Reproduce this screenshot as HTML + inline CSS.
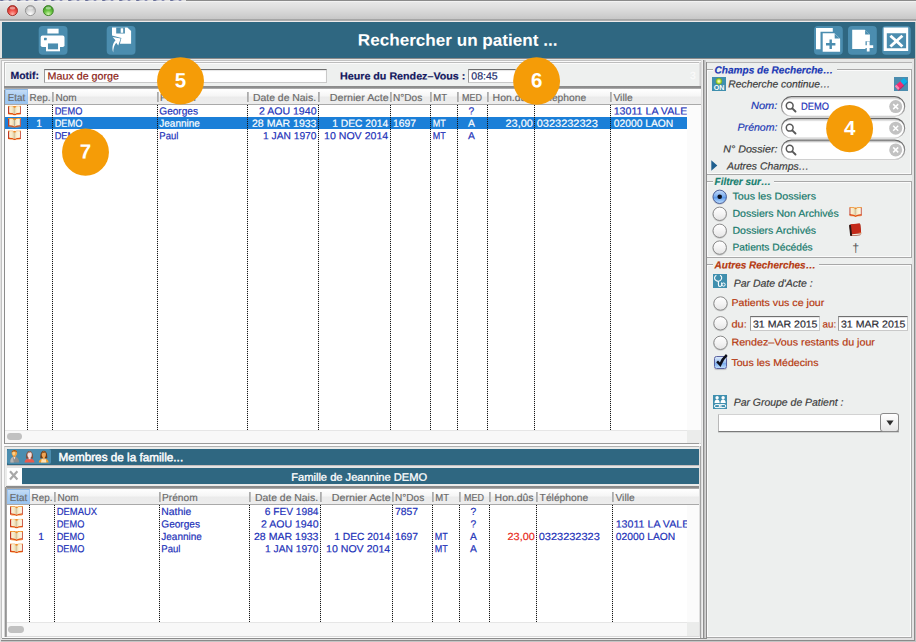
<!DOCTYPE html>
<html lang="fr">
<head>
<meta charset="utf-8">
<title>Rechercher un patient ...</title>
<style>
html,body{margin:0;padding:0;}
body{width:916px;height:642px;overflow:hidden;background:#d9d9d9;font-family:"Liberation Sans",sans-serif;}
#win{position:relative;width:916px;height:642px;overflow:hidden;background:#e3e4e3;}
#win div,#win span,#win svg{position:absolute;box-sizing:border-box;}
.t{-webkit-text-stroke:0.18px currentColor;white-space:pre;line-height:normal;z-index:5;transform-origin:0 50%;}
.vd{width:1px;background:repeating-linear-gradient(to bottom,#161616 0,#161616 1px,rgba(0,0,0,.1) 1px,rgba(0,0,0,.1) 2px);z-index:4;}
.hs{width:1px;background:linear-gradient(to right,#a4a4a4,#c4c4c4);z-index:4;}
.hdr{background:linear-gradient(to bottom,#ffffff 0%,#f6f6f6 45%,#ebebeb 55%,#ededed 100%);border-bottom:1px solid #a9a9a9;}
.etat{background:linear-gradient(to bottom,#c4dcf5 0%,#a9cdf3 50%,#9cc6f2 100%);border:1px solid #9cc4ee;border-top-color:#8ab6e4;}
.sel{background:#1b7fd8;}
.rad{width:14px;height:14px;border-radius:50%;border:1px solid #8d8d8d;background:linear-gradient(to bottom,#ffffff,#ececec);box-shadow:0 1px 1px rgba(0,0,0,.18);}
.grp{border:1px solid #a8a8a8;box-shadow:inset 0 0 0 1px #fbfbfb;}
.pill{height:19px;border-radius:10px;background:#fff;border:1px solid #8f8f8f;box-shadow:inset 0 1px 2px rgba(0,0,0,.3);}
.clr{width:13px;height:13px;border-radius:50%;background:#c4c4c4;}
.orb{width:46px;height:46px;border-radius:50%;background:#f59c07;z-index:10;}
.inp{background:#fff;border:1px solid #c9c9c9;border-top-color:#6f6f6f;border-left-color:#9a9a9a;box-shadow:inset 0 1px 1px rgba(0,0,0,.10);}
.ibtn{width:29px;height:29px;border-radius:4px;background:#4b8daf;}
</style>
</head>
<body>
<div id="win">
<div style="left:0px;top:0px;width:916px;height:22px;background:linear-gradient(to bottom,#f4f4f4 0px,#f2f2f2 2px,#e7e7e7 2.5px,#dedede 8px,#d2d2d2 14px,#c8c8c8 18.6px,#a4a4a4 19px,#a6a6a6 20px,#b8b8b8 21px,#e6e2e2 21px,#f6f2f2 22px);"></div>
<div style="left:0px;top:0px;width:916px;height:1px;background:#8a8a8a;"></div>
<div style="left:0px;top:0px;width:186px;height:1px;background:repeating-linear-gradient(to right,#8a90a8 0,#5a6090 2px,#c0c4d0 4px,#e0e0e4 8px,#6a70a0 10px,#dcdcdc 12px,#e4e4e4 17px);"></div>
<svg width="14" height="14" viewBox="0 0 14 14" style="left:5px;top:4px;z-index:3;"><defs><radialGradient id="tl12" cx="0.5" cy="0.86" r="0.75"><stop offset="0" stop-color="#ffb4aa"/><stop offset="0.5" stop-color="#f2564e"/><stop offset="1" stop-color="#c62f28"/></radialGradient></defs><circle cx="7.50" cy="6.6" r="5.0" fill="url(#tl12)" stroke="#9c2a24" stroke-width="0.9"/><ellipse cx="7.50" cy="3.9" rx="2.8" ry="1.5" fill="rgba(255,255,255,0.45)"/></svg>
<svg width="14" height="14" viewBox="0 0 14 14" style="left:23px;top:4px;z-index:3;"><defs><radialGradient id="tl30" cx="0.5" cy="0.86" r="0.75"><stop offset="0" stop-color="#ffffff"/><stop offset="0.5" stop-color="#dcdcdc"/><stop offset="1" stop-color="#b4b4b4"/></radialGradient></defs><circle cx="7.40" cy="6.6" r="5.0" fill="url(#tl30)" stroke="#8e8e8e" stroke-width="0.9"/><ellipse cx="7.40" cy="3.9" rx="2.8" ry="1.5" fill="rgba(255,255,255,0.45)"/></svg>
<svg width="14" height="14" viewBox="0 0 14 14" style="left:41px;top:4px;z-index:3;"><defs><radialGradient id="tl48" cx="0.5" cy="0.86" r="0.75"><stop offset="0" stop-color="#d2f5b0"/><stop offset="0.5" stop-color="#6cc644"/><stop offset="1" stop-color="#3f9a24"/></radialGradient></defs><circle cx="7.30" cy="6.6" r="5.0" fill="url(#tl48)" stroke="#3a7f22" stroke-width="0.9"/><ellipse cx="7.30" cy="3.9" rx="2.8" ry="1.5" fill="rgba(255,255,255,0.45)"/></svg>
<div style="left:2px;top:22px;width:913px;height:36px;background:#2f6781;"></div>
<div style="left:0px;top:58px;width:916px;height:1.3px;background:#8a8a8a;"></div>
<div style="left:0px;top:59.3px;width:916px;height:1px;background:#d0d0d0;"></div>
<svg width="32" height="32" viewBox="0 0 32 32" style="left:37px;top:24px;z-index:2;"><g transform="translate(1.70 1.90)"><rect width="28.8" height="28.9" rx="4" fill="#4b8daf"/><rect x="8.700" y="2.800" width="11.200" height="4.800" fill="#fff"/>
<rect x="2" y="9.700" width="23.800" height="11.500" rx="1.800" fill="#fff"/>
<rect x="7.300" y="16" width="14" height="9.400" fill="#fff"/>
<rect x="9.250" y="17.550" width="10.100" height="5.850" fill="#4b8daf"/>
<rect x="5.300" y="11.800" width="2.700" height="2.600" rx=".5" fill="#4b8daf"/>
</g></svg>
<svg width="32" height="32" viewBox="0 0 32 32" style="left:105px;top:24px;z-index:2;"><g transform="translate(1.70 1.90)"><rect width="28.8" height="28.9" rx="4" fill="#4b8daf"/><path d="M5.300 1.600h15.400l3.700 3.600v12.600h-11.200l1.500-5.800-9.400-2.400z" fill="#fff"/>
<rect x="9.500" y="1.600" width="8.700" height="6" fill="#4b8daf"/>
<rect x="14" y="2.400" width="2.500" height="4.500" fill="#fff"/>
<path d="M6.500 26.600c-1.500-4.800-.5-9.200 2.300-12.200l-2.900-3.200 8.100 1.500-2.500 6.900-2-2.700c-2 2.400-3 5.400-3 9.700z" fill="#fff"/>
</g></svg>
<svg width="32" height="32" viewBox="0 0 32 32" style="left:813px;top:24px;z-index:2;"><g transform="translate(1.00 1.90)"><rect width="28.8" height="28.9" rx="4" fill="#4b8daf"/><path d="M2 2.100h16.800v3.700h-12.300v17.600h-4.500z" fill="#fff"/>
<path d="M8.700 7.400h11.600l5.800 5.400v13.100h-17.400z" fill="#fff"/>
<path d="M20.700 7.800v4.800h5z" fill="#4b8daf"/>
<path d="M15.500 13.700h2.400v3.500h3.500v2.400h-3.500v3.500h-2.400v-3.500h-3.500v-2.400h3.500z" fill="#4b8daf"/>
</g></svg>
<svg width="32" height="32" viewBox="0 0 32 32" style="left:847px;top:24px;z-index:2;"><g transform="translate(1.00 1.90)"><rect width="28.8" height="28.9" rx="4" fill="#4b8daf"/><path d="M4.200 3.800h12.600l5.100 5v6.500h-4.400v7.800h-13.300z" fill="#fff"/>
<path d="M17.100 4.200v4.400h4.600z" fill="#4b8daf"/>
<path d="M18.800 15.700h2.800v3.600h3.600v2.800h-3.600v3.600h-2.800v-3.600h-3.600v-2.800h3.600z" fill="#fff"/>
</g></svg>
<svg width="32" height="32" viewBox="0 0 32 32" style="left:881px;top:24px;z-index:2;"><g transform="translate(1.00 1.90)"><rect width="28.8" height="28.9" rx="4" fill="#4b8daf"/><path d="M1.600 1.500h24.600v23.600h-24.600z M4.800 7.400v15h19.300v-15z" fill="#fff" fill-rule="evenodd"/>
<path d="M9.400 8.800l5 4.600 5-4.600 2 2-4.900 4.400 4.900 4.400-2 2-5-4.600-5 4.600-2-2 4.900-4.400-4.900-4.400z" fill="#fff"/>
</g></svg>
<div style="left:0px;top:59px;width:916px;height:583px;background:#e6e7e6;"></div>
<div style="left:1px;top:60px;width:704px;height:579px;border:1px solid #c2c2c2;background:#fafafa;"></div>
<div style="left:4px;top:62px;width:698px;height:382px;border:1px solid #bdbdbd;border-right:none;border-bottom-color:#9a9a9a;background:#eef0ef;box-shadow:inset 1px 1px 0 #fbfbfb;"></div>
<div style="left:4px;top:87px;width:1px;height:357px;background:#8c8c8c;"></div>
<div style="left:4px;top:446px;width:698px;height:192px;border-top:1px solid #b2b2b2;border-left:1px solid #d4d4d4;background:#ebeceb;"></div>
<div style="left:699.4px;top:62px;width:1.6px;height:577px;background:linear-gradient(to right,#e6e6e6,#c9c9c9);"></div>
<div style="left:701px;top:60px;width:2px;height:579px;background:linear-gradient(to right,#d6d6d6,#f6f6f6);"></div>
<div style="left:703px;top:60px;width:1px;height:579px;background:#8e8e8e;"></div>
<div style="left:704px;top:60px;width:2px;height:579px;background:linear-gradient(to right,#b2b2b2,#dedede);"></div>
<div style="left:706px;top:62px;width:1px;height:577px;background:#8c8c8c;z-index:1;"></div>
<div style="left:706px;top:62px;width:208px;height:577px;background:#edefee;border-top:1px solid #b4b4b4;"></div>
<div style="left:0px;top:638px;width:916px;height:2px;background:#e2e2e2;"></div>
<div style="left:2px;top:637.6px;width:704px;height:1.4px;background:#8c8c8c;"></div>
<div style="left:912px;top:59px;width:2px;height:581px;background:#e4e4e4;"></div>
<div style="left:914px;top:59px;width:1px;height:582px;background:#8c8c8c;"></div>
<div style="left:915px;top:22px;width:1px;height:620px;background:#c2c2c2;"></div>
<div style="left:0px;top:640px;width:915px;height:1px;background:#8a8a8a;"></div>
<div style="left:0px;top:641px;width:916px;height:1px;background:#c4c4c4;"></div>
<div style="left:0px;top:59px;width:1px;height:583px;background:#e2e2e2;"></div>
<div class="inp" style="left:44.3px;top:68.8px;width:283.2px;height:13.9px;"></div>
<div class="inp" style="left:467.5px;top:68.8px;width:48px;height:13.9px;"></div>
<div style="left:4.2px;top:86.4px;width:697.0999999999999px;height:3.4px;background:linear-gradient(to bottom,#8a8a8a 0,#8e8e8e 40%,#a9a9a9 60%,#c6c6c6 100%);"></div>
<div style="left:5.2px;top:104.60000000000001px;width:682.0999999999999px;height:325.4px;background:#fff;"></div>
<div style="left:687.3px;top:104.60000000000001px;width:14.0px;height:325.4px;background:#fbfbfb;"></div>
<div style="left:687.3px;top:430px;width:14.0px;height:13.2px;background:#ebeceb;z-index:2;"></div>
<div class="hdr" style="left:5.2px;top:89.4px;width:696.0999999999999px;height:15.2px;"></div>
<div class="etat" style="left:5.2px;top:89.4px;width:22.8px;height:14.2px;"></div>
<div class="hs" style="left:52.1px;top:92.0px;width:2px;height:10.0px;"></div>
<div class="hs" style="left:157.3px;top:92.0px;width:2px;height:10.0px;"></div>
<div class="hs" style="left:246.7px;top:92.0px;width:2px;height:10.0px;"></div>
<div class="hs" style="left:317.9px;top:92.0px;width:2px;height:10.0px;"></div>
<div class="hs" style="left:390.1px;top:92.0px;width:2px;height:10.0px;"></div>
<div class="hs" style="left:429.9px;top:92.0px;width:2px;height:10.0px;"></div>
<div class="hs" style="left:456.9px;top:92.0px;width:2px;height:10.0px;"></div>
<div class="hs" style="left:486.9px;top:92.0px;width:2px;height:10.0px;"></div>
<div class="hs" style="left:533.9px;top:92.0px;width:2px;height:10.0px;"></div>
<div class="hs" style="left:610.1px;top:92.0px;width:2px;height:10.0px;"></div>
<div class="vd" style="left:27.0px;top:104.60000000000001px;width:1px;height:325.4px;"></div>
<div class="vd" style="left:52.2px;top:104.60000000000001px;width:1px;height:325.4px;"></div>
<div class="vd" style="left:157.4px;top:104.60000000000001px;width:1px;height:325.4px;"></div>
<div class="vd" style="left:246.79999999999998px;top:104.60000000000001px;width:1px;height:325.4px;"></div>
<div class="vd" style="left:318.0px;top:104.60000000000001px;width:1px;height:325.4px;"></div>
<div class="vd" style="left:390.20000000000005px;top:104.60000000000001px;width:1px;height:325.4px;"></div>
<div class="vd" style="left:430.0px;top:104.60000000000001px;width:1px;height:325.4px;"></div>
<div class="vd" style="left:457.0px;top:104.60000000000001px;width:1px;height:325.4px;"></div>
<div class="vd" style="left:487.0px;top:104.60000000000001px;width:1px;height:325.4px;"></div>
<div class="vd" style="left:534.0px;top:104.60000000000001px;width:1px;height:325.4px;"></div>
<div class="vd" style="left:610.2px;top:104.60000000000001px;width:1px;height:325.4px;"></div>
<svg width="13.2" height="10.3" viewBox="0 0 26 21" preserveAspectRatio="none" style="left:8px;top:105px;transform:translate(0.00px,0.40px);z-index:6;"><use href="#book"/></svg>
<div class="sel" style="left:5.2px;top:117px;width:682.0999999999999px;height:12px;z-index:3;"></div>
<svg width="13.2" height="10.3" viewBox="0 0 26 21" preserveAspectRatio="none" style="left:8px;top:117px;transform:translate(0.00px,0.85px);z-index:6;"><use href="#book"/></svg>
<svg width="13.2" height="10.3" viewBox="0 0 26 21" preserveAspectRatio="none" style="left:8px;top:130px;transform:translate(0.00px,0.30px);z-index:6;"><use href="#book"/></svg>
<div style="left:5.2px;top:430px;width:696.0999999999999px;height:13.2px;background:#f8f8f8;border-top:1px solid #e6e6e6;"></div>
<div style="left:7.0px;top:433.4px;width:15.2px;height:6.8px;background:#c1c1c1;border-radius:3.4px;"></div>
<div style="left:6.2px;top:486.4px;width:693.0px;height:3.4px;background:linear-gradient(to bottom,#8a8a8a 0,#8e8e8e 40%,#a9a9a9 60%,#c6c6c6 100%);"></div>
<div style="left:7.2px;top:504.59999999999997px;width:680.0999999999999px;height:117.80000000000001px;background:#fff;"></div>
<div style="left:687.3px;top:504.59999999999997px;width:11.900000000000091px;height:117.80000000000001px;background:#fbfbfb;"></div>
<div style="left:687.3px;top:622.4px;width:11.900000000000091px;height:13.2px;background:#ebeceb;z-index:2;"></div>
<div class="hdr" style="left:7.2px;top:489.4px;width:692.0px;height:15.2px;"></div>
<div class="etat" style="left:7.2px;top:489.4px;width:22.8px;height:14.2px;"></div>
<div class="hs" style="left:54.1px;top:492.0px;width:2px;height:10.0px;"></div>
<div class="hs" style="left:159.3px;top:492.0px;width:2px;height:10.0px;"></div>
<div class="hs" style="left:248.7px;top:492.0px;width:2px;height:10.0px;"></div>
<div class="hs" style="left:319.9px;top:492.0px;width:2px;height:10.0px;"></div>
<div class="hs" style="left:392.1px;top:492.0px;width:2px;height:10.0px;"></div>
<div class="hs" style="left:431.9px;top:492.0px;width:2px;height:10.0px;"></div>
<div class="hs" style="left:458.9px;top:492.0px;width:2px;height:10.0px;"></div>
<div class="hs" style="left:488.9px;top:492.0px;width:2px;height:10.0px;"></div>
<div class="hs" style="left:535.9px;top:492.0px;width:2px;height:10.0px;"></div>
<div class="hs" style="left:612.1px;top:492.0px;width:2px;height:10.0px;"></div>
<div class="vd" style="left:29.0px;top:504.59999999999997px;width:1px;height:117.80000000000001px;"></div>
<div class="vd" style="left:54.2px;top:504.59999999999997px;width:1px;height:117.80000000000001px;"></div>
<div class="vd" style="left:159.4px;top:504.59999999999997px;width:1px;height:117.80000000000001px;"></div>
<div class="vd" style="left:248.79999999999998px;top:504.59999999999997px;width:1px;height:117.80000000000001px;"></div>
<div class="vd" style="left:320.0px;top:504.59999999999997px;width:1px;height:117.80000000000001px;"></div>
<div class="vd" style="left:392.20000000000005px;top:504.59999999999997px;width:1px;height:117.80000000000001px;"></div>
<div class="vd" style="left:432.0px;top:504.59999999999997px;width:1px;height:117.80000000000001px;"></div>
<div class="vd" style="left:459.0px;top:504.59999999999997px;width:1px;height:117.80000000000001px;"></div>
<div class="vd" style="left:489.0px;top:504.59999999999997px;width:1px;height:117.80000000000001px;"></div>
<div class="vd" style="left:536.0px;top:504.59999999999997px;width:1px;height:117.80000000000001px;"></div>
<div class="vd" style="left:612.2px;top:504.59999999999997px;width:1px;height:117.80000000000001px;"></div>
<svg width="13.2" height="10.3" viewBox="0 0 26 21" preserveAspectRatio="none" style="left:10px;top:506px;transform:translate(0.00px,0.00px);z-index:6;"><use href="#book"/></svg>
<svg width="13.2" height="10.3" viewBox="0 0 26 21" preserveAspectRatio="none" style="left:10px;top:518px;transform:translate(0.00px,0.45px);z-index:6;"><use href="#book"/></svg>
<svg width="13.2" height="10.3" viewBox="0 0 26 21" preserveAspectRatio="none" style="left:10px;top:530px;transform:translate(0.00px,0.90px);z-index:6;"><use href="#book"/></svg>
<svg width="13.2" height="10.3" viewBox="0 0 26 21" preserveAspectRatio="none" style="left:10px;top:543px;transform:translate(0.00px,0.35px);z-index:6;"><use href="#book"/></svg>
<div style="left:7.2px;top:622.4px;width:692.0px;height:13.2px;background:#f8f8f8;border-top:1px solid #e6e6e6;"></div>
<div style="left:8.2px;top:625.8px;width:15.9px;height:6.8px;background:#c1c1c1;border-radius:3.4px;"></div>
<div style="left:5px;top:487px;width:1.6px;height:151px;background:linear-gradient(to right,#8a8a8a,#b0b0b0);"></div>
<div style="left:7px;top:635.6px;width:692.4px;height:1px;background:#dadada;"></div>
<div style="left:4px;top:636.6px;width:697px;height:1.2px;background:#fdfdfd;"></div>
<div style="left:2px;top:444px;width:699px;height:2px;background:#fbfbfb;"></div>
<div style="left:699.6px;top:446px;width:1.8px;height:192px;background:linear-gradient(to right,#b8b8b8,#8e8e8e);z-index:1;"></div>
<div style="left:7.2px;top:449.2px;width:692px;height:15.4px;background:#2f6781;"></div>
<div style="left:7.4px;top:449.4px;width:43.6px;height:14.6px;background:#4b8daf;border-radius:2px;"></div>
<div style="left:7.2px;top:464.6px;width:692px;height:3.4px;background:#e4e4e4;border-top:1px solid #c4bebe;"></div>
<div style="left:21.4px;top:468.1px;width:677.8px;height:16px;background:#2f6781;"></div>
<div style="left:7.2px;top:468.1px;width:14.4px;height:16px;background:#ffffff;"></div>
<div style="left:7.2px;top:484.1px;width:14.4px;height:1.2px;background:#ffffff;"></div>
<svg width="44" height="16" viewBox="0 0 44 16" style="left:7.200px;top:449px;z-index:6;">
<g>
<path d="M3.400 13.400c-.4-4.200 1.600-5.600 4-5.800 2.400.2 4.600 1.600 4.800 5.800z" fill="#8e8e8e"/>
<path d="M3.400 13.400c-.2-3 .8-4.800 2.400-5.400l1 5.400z" fill="#b4b4b4"/>
<path d="M6.300 7.600h2.200l-1.100 2.800z" fill="#f2f2f2"/>
<rect x="6.300" y="5.800" width="2.200" height="2.400" fill="#e8923a"/>
<ellipse cx="7.400" cy="4" rx="2.700" ry="3.100" fill="#f4a546"/>
<ellipse cx="6.800" cy="4.200" rx="1.300" ry="2" fill="#fbd08a"/>
<path d="M4.600 3.800c-.2-3.600 5.800-3.800 5.600 0-.8-1.600-4.600-1.800-5.600 0z" fill="#9a5418"/>
</g>
<g>
<path d="M17.600 13.600c0-5.400 9.800-5.400 9.800 0z" fill="#ea5a4c"/>
<path d="M19 9.400c-1-9.800 8-9.800 7 0z" fill="#7d5140"/>
<ellipse cx="22.600" cy="5.800" rx="2.200" ry="3" fill="#fbe0dc"/>
<rect x="21.600" y="8" width="2" height="2.200" fill="#fbe0dc"/>
<path d="M20.200 5c.6-2 2.600-2.800 4.600-1.400-1.600-.2-3.200.2-4.600 1.400z" fill="#7d5140"/>
</g>
<g>
<path d="M31.800 13.600c0-5.600 9.800-5.600 9.800 0z" fill="#f6a02c"/>
<path d="M34.800 9.800h3.800l.8 3.800h-5.400z" fill="#fde2b8"/>
<path d="M33.400 9.200c-1-9.800 7.800-9.800 6.800 0z" fill="#6e3a12"/>
<ellipse cx="36.800" cy="5.600" rx="2.100" ry="3" fill="#eda556"/>
<rect x="35.800" y="8" width="2" height="2.400" fill="#eda556"/>
<path d="M34.400 4.800c.8-2 3.200-2.600 4.800-1.200-1.800-.2-3.400.2-4.800 1.200z" fill="#6e3a12"/>
</g>
</svg>
<svg width="14" height="16" viewBox="0 0 14 16" style="left:7.2px;top:468.1px;z-index:6;"><path d="M3 3.200l7.400 8.200M10.400 3.200l-7.400 8.200" stroke="#a8a8a8" stroke-width="2.200" fill="none"/></svg>
<div class="grp" style="left:706.2px;top:69.0px;width:206px;height:106.0px;"></div>
<div style="left:712.6px;top:63.0px;width:124.0px;height:12px;background:#edefee;"></div>
<div class="grp" style="left:706.2px;top:181.2px;width:206px;height:76.40000000000003px;"></div>
<div style="left:712.6px;top:175.2px;width:61.800000000000004px;height:12px;background:#edefee;"></div>
<div class="grp" style="left:706.2px;top:264.2px;width:206px;height:374.00000000000006px;"></div>
<div style="left:712.6px;top:258.2px;width:106.6px;height:12px;background:#edefee;"></div>
<svg width="14" height="14.400" viewBox="0 0 14 14.400" style="left:711.600px;top:77px;z-index:6;"><defs><radialGradient id="ong"><stop offset="0" stop-color="#ffffe8"/><stop offset="0.35" stop-color="#e4f48c"/><stop offset="0.7" stop-color="#a4d030"/><stop offset="1" stop-color="#74a81c"/></radialGradient></defs><rect width="14" height="14.400" fill="#3f8fae"/><circle cx="6.900" cy="4.300" r="3.200" fill="url(#ong)"/><text x="1.700" y="12.900" font-family="Liberation Sans, sans-serif" font-size="7" font-weight="bold" fill="#fff" textLength="10.600" lengthAdjust="spacingAndGlyphs">ON</text></svg>
<svg width="14.600" height="14.400" viewBox="0 0 14.600 14.400" style="left:893.600px;top:77px;z-index:6;"><rect width="14.600" height="14.400" fill="#4b8daf"/><g transform="rotate(-42 7.300 7.200)"><rect x="1" y="9" width="7.600" height="1.300" fill="#c42660"/><rect x="8.600" y="9" width="5" height="1.300" fill="#0c8cc4"/><rect x="1" y="4.400" width="7.800" height="4.800" rx=".7" fill="#f02c72"/><rect x="8.600" y="4.400" width="5" height="4.800" rx=".7" fill="#08b0ea"/><rect x="1" y="4.400" width="2.300" height="4.800" rx=".7" fill="#f88cb4"/></g></svg>
<svg width="130" height="26" viewBox="0 0 130 26" style="left:778px;top:94px;z-index:2;"><rect x="3.0" y="2.20" width="124.2" height="20.8" rx="10.4" fill="none" stroke="rgba(255,255,255,.75)" stroke-width="1"/><rect x="3.5" y="2.70" width="123.2" height="19.7" rx="9.85" fill="#fff" stroke="url(#pst)" stroke-width="1.25"/><path d="M8 5.10c1.800-.9 3.800-1.100 6-1.100h102.200c2.200 0 4.200.2 6 1.100" fill="none" stroke="rgba(0,0,0,.2)" stroke-width="1.2"/><path d="M6.400 6.70c2.200-1.500 4.800-1.700 7.600-1.700h102.200c2.800 0 5.400.2 7.600 1.700" fill="none" stroke="rgba(0,0,0,.07)" stroke-width="1.2"/></svg>
<svg width="12" height="12" viewBox="0 0 12 12" style="left:784.600px;top:101.1px;z-index:6;"><circle cx="4.700" cy="4.700" r="3.400" fill="none" stroke="#585858" stroke-width="1.500"/><path d="M7.300 7.300l3.200 3.200" stroke="#585858" stroke-width="1.900" stroke-linecap="round"/></svg>
<svg width="15" height="15" viewBox="0 0 15 15" style="left:888px;top:100px;z-index:6;"><g transform="translate(1.2 0.10)"><circle cx="6.500" cy="6.500" r="6.500" fill="#c2c2c2"/><path d="M4 4l5 5M9 4l-5 5" stroke="#fff" stroke-width="1.500"/></g></svg>
<svg width="130" height="26" viewBox="0 0 130 26" style="left:778px;top:116px;z-index:2;"><rect x="3.0" y="1.80" width="124.2" height="20.8" rx="10.4" fill="none" stroke="rgba(255,255,255,.75)" stroke-width="1"/><rect x="3.5" y="2.30" width="123.2" height="19.7" rx="9.85" fill="#fff" stroke="url(#pst)" stroke-width="1.25"/><path d="M8 4.70c1.800-.9 3.800-1.100 6-1.100h102.200c2.200 0 4.200.2 6 1.100" fill="none" stroke="rgba(0,0,0,.2)" stroke-width="1.2"/><path d="M6.400 6.30c2.200-1.500 4.800-1.700 7.600-1.700h102.200c2.800 0 5.400.2 7.600 1.700" fill="none" stroke="rgba(0,0,0,.07)" stroke-width="1.2"/></svg>
<svg width="12" height="12" viewBox="0 0 12 12" style="left:784.600px;top:122.7px;z-index:6;"><circle cx="4.700" cy="4.700" r="3.400" fill="none" stroke="#585858" stroke-width="1.500"/><path d="M7.300 7.300l3.200 3.200" stroke="#585858" stroke-width="1.900" stroke-linecap="round"/></svg>
<svg width="15" height="15" viewBox="0 0 15 15" style="left:888px;top:121px;z-index:6;"><g transform="translate(1.2 0.70)"><circle cx="6.500" cy="6.500" r="6.500" fill="#c2c2c2"/><path d="M4 4l5 5M9 4l-5 5" stroke="#fff" stroke-width="1.500"/></g></svg>
<svg width="130" height="26" viewBox="0 0 130 26" style="left:778px;top:138px;z-index:2;"><rect x="3.0" y="1.50" width="124.2" height="20.8" rx="10.4" fill="none" stroke="rgba(255,255,255,.75)" stroke-width="1"/><rect x="3.5" y="2.00" width="123.2" height="19.7" rx="9.85" fill="#fff" stroke="url(#pst)" stroke-width="1.25"/><path d="M8 4.40c1.800-.9 3.800-1.100 6-1.100h102.200c2.200 0 4.200.2 6 1.100" fill="none" stroke="rgba(0,0,0,.2)" stroke-width="1.2"/><path d="M6.400 6.00c2.200-1.500 4.800-1.700 7.600-1.700h102.200c2.800 0 5.400.2 7.600 1.700" fill="none" stroke="rgba(0,0,0,.07)" stroke-width="1.2"/></svg>
<svg width="12" height="12" viewBox="0 0 12 12" style="left:784.600px;top:144.4px;z-index:6;"><circle cx="4.700" cy="4.700" r="3.400" fill="none" stroke="#585858" stroke-width="1.500"/><path d="M7.300 7.300l3.200 3.200" stroke="#585858" stroke-width="1.900" stroke-linecap="round"/></svg>
<svg width="15" height="15" viewBox="0 0 15 15" style="left:888px;top:143px;z-index:6;"><g transform="translate(1.2 0.40)"><circle cx="6.500" cy="6.500" r="6.500" fill="#c2c2c2"/><path d="M4 4l5 5M9 4l-5 5" stroke="#fff" stroke-width="1.500"/></g></svg>
<svg width="7" height="11" viewBox="0 0 7 11" style="left:711px;top:159.800px;z-index:6;"><path d="M0.300 0.300l6 5.200-6 5.200z" fill="#1f5f8f"/></svg>
<svg width="20" height="20" viewBox="0 0 20 20" style="left:709px;top:186px;z-index:6;"><circle cx="10.70" cy="11.60" r="7.3" fill="rgba(0,0,0,0.13)"/><circle cx="10.70" cy="10.80" r="6.7" fill="url(#rgs)" stroke="#4a5f9a" stroke-width="1"/><circle cx="10.70" cy="10.80" r="2.3" fill="#0c0f1c"/></svg>
<svg width="20" height="20" viewBox="0 0 20 20" style="left:709px;top:203px;z-index:6;"><circle cx="10.70" cy="11.60" r="7.3" fill="rgba(0,0,0,0.12)"/><circle cx="10.70" cy="10.80" r="6.7" fill="url(#rgn)" stroke="#8a8a8a" stroke-width="1"/></svg>
<svg width="20" height="20" viewBox="0 0 20 20" style="left:709px;top:220px;z-index:6;"><circle cx="10.70" cy="11.60" r="7.3" fill="rgba(0,0,0,0.12)"/><circle cx="10.70" cy="10.80" r="6.7" fill="url(#rgn)" stroke="#8a8a8a" stroke-width="1"/></svg>
<svg width="20" height="20" viewBox="0 0 20 20" style="left:709px;top:237px;z-index:6;"><circle cx="10.70" cy="11.40" r="7.3" fill="rgba(0,0,0,0.12)"/><circle cx="10.70" cy="10.60" r="6.7" fill="url(#rgn)" stroke="#8a8a8a" stroke-width="1"/></svg>
<svg width="13.200" height="10.200" viewBox="0 0 26 21" style="left:848.800px;top:206.800px;z-index:6;"><use href="#book"/></svg>
<svg width="13" height="14" viewBox="0 0 13 14" style="left:848.600px;top:223.200px;z-index:6;"><g transform="rotate(-6 6.500 7)"><rect x="1" y="1" width="10.800" height="11.600" rx="1.400" fill="#8a2a14"/><rect x="1.600" y="0.800" width="10.200" height="10" rx="1.200" fill="#c42a1a"/><rect x="0.600" y="1.200" width="1.900" height="11.200" rx=".8" fill="#2a1614"/><path d="M2.600 10.900h9.200v1.100h-9.200z" fill="#f4e8d8"/><path d="M8.800 9.600l3 .2v1.100z" fill="#e86a2a"/></g></svg>
<svg width="14.400" height="14" viewBox="0 0 14.400 14" style="left:712.600px;top:274.200px;z-index:6;"><rect width="14.400" height="14" fill="#3f8fae"/><path d="M3.400 1.300C1 2.400 .8 5.600 3.400 6.800 5 7.500 6.800 7.200 7.800 6 9.400 4.200 8.800 2 7 1.200" fill="none" stroke="#fff" stroke-width="1.100"/><path d="M5.400 7.200v3.600c0 2.200 3 2.200 3.200.2" fill="none" stroke="#fff" stroke-width="1.100"/><circle cx="10.600" cy="10.600" r="1.600" fill="none" stroke="#fff" stroke-width="1"/><path d="M8.600 10.800v-2.400" stroke="#fff" stroke-width="1"/></svg>
<svg width="20" height="20" viewBox="0 0 20 20" style="left:710px;top:293px;z-index:6;"><circle cx="10.50" cy="11.30" r="7.3" fill="rgba(0,0,0,0.12)"/><circle cx="10.50" cy="10.50" r="6.7" fill="url(#rgn)" stroke="#8a8a8a" stroke-width="1"/></svg>
<svg width="20" height="20" viewBox="0 0 20 20" style="left:710px;top:313px;z-index:6;"><circle cx="10.50" cy="11.10" r="7.3" fill="rgba(0,0,0,0.12)"/><circle cx="10.50" cy="10.30" r="6.7" fill="url(#rgn)" stroke="#8a8a8a" stroke-width="1"/></svg>
<div class="inp" style="left:750px;top:316.4px;width:70px;height:14.2px;"></div>
<div class="inp" style="left:838px;top:316.4px;width:70px;height:14.2px;"></div>
<svg width="20" height="20" viewBox="0 0 20 20" style="left:710px;top:332px;z-index:6;"><circle cx="10.50" cy="11.60" r="7.3" fill="rgba(0,0,0,0.12)"/><circle cx="10.50" cy="10.80" r="6.7" fill="url(#rgn)" stroke="#8a8a8a" stroke-width="1"/></svg>
<div style="left:714.2px;top:356.2px;width:12.8px;height:12.6px;border:1px solid #5a62a0;border-radius:2.500px;background:linear-gradient(to bottom,#dbe9fb 0%,#9cc0f0 50%,#78aaec 55%,#bcdcfc 100%);box-shadow:0 1px 1px rgba(0,0,0,.2);"></div>
<svg width="16" height="16" viewBox="0 0 16 16" style="left:714px;top:353px;z-index:6;"><path d="M3.100 8.300l3.100 3.400c1.500-4 3.500-7 6.600-9.700" fill="none" stroke="#0d0f1a" stroke-width="2.500" stroke-linejoin="miter"/></svg>
<svg width="14.400" height="14" viewBox="0 0 14.400 14" style="left:712.700px;top:394.900px;z-index:6;"><rect width="14.400" height="14" fill="#3f8fae"/><circle cx="4.100" cy="2.700" r="1.700" fill="#fff"/><path d="M1.500 8c0-4.600 5.200-4.600 5.200 0z" fill="#fff"/><circle cx="10.100" cy="2.700" r="1.700" fill="#fff"/><path d="M7.500 8c0-4.600 5.200-4.600 5.200 0z" fill="#fff"/><rect x="1.500" y="9.600" width="6.600" height="3" rx="1.500" fill="none" stroke="#fff" stroke-width="1"/><rect x="6.200" y="9.600" width="6.600" height="3" rx="1.500" fill="none" stroke="#fff" stroke-width="1"/></svg>
<div style="left:717.7px;top:414.3px;width:181px;height:17.4px;background:#fff;border:1px solid #b8b8b8;border-top-color:#d2d2d2;border-bottom-color:#7a7a7a;box-shadow:0 1px 0 rgba(0,0,0,.12);"></div>
<div style="left:880.4px;top:413.3px;width:18.6px;height:18.6px;background:linear-gradient(to bottom,#ffffff,#e6e6e6);border:1px solid #8a8a8a;border-radius:3px;z-index:6;"></div>
<svg width="8" height="6" viewBox="0 0 8 6" style="left:885.800px;top:420px;z-index:7;"><path d="M0.400 0.600h7.200l-3.600 4.800z" fill="#2b2b2b"/></svg>
<svg width="50" height="50" viewBox="0 0 50 50" style="left:155px;top:55px;z-index:10;"><ellipse cx="25.50" cy="25.90" rx="23.45" ry="23.7" fill="#f59c07"/></svg>
<svg width="50" height="50" viewBox="0 0 50 50" style="left:511px;top:56px;z-index:10;"><ellipse cx="25.60" cy="25.00" rx="23.45" ry="23.7" fill="#f59c07"/></svg>
<svg width="50" height="50" viewBox="0 0 50 50" style="left:824px;top:103px;z-index:10;"><ellipse cx="25.60" cy="25.60" rx="23.45" ry="23.7" fill="#f59c07"/></svg>
<svg width="50" height="50" viewBox="0 0 50 50" style="left:60px;top:127px;z-index:10;"><ellipse cx="25.50" cy="25.10" rx="23.45" ry="23.7" fill="#f59c07"/></svg>
<svg width="0" height="0" style="left:0;top:0"><defs>
<linearGradient id="bkl" x1="0" y1="0" x2="1" y2="0"><stop offset="0" stop-color="#fbf2d6"/><stop offset="0.55" stop-color="#f6e9c6"/><stop offset="1" stop-color="#dccaa0"/></linearGradient>
<linearGradient id="bkr" x1="0" y1="0" x2="1" y2="0"><stop offset="0" stop-color="#e6d6ae"/><stop offset="0.4" stop-color="#faf0d2"/><stop offset="1" stop-color="#fdf7e0"/></linearGradient>
<linearGradient id="pst" x1="0" y1="0" x2="0" y2="1"><stop offset="0" stop-color="#686868"/><stop offset="0.35" stop-color="#7c7c7c"/><stop offset="0.75" stop-color="#a2a2a2"/><stop offset="1" stop-color="#d2d2d2"/></linearGradient>
<linearGradient id="rgn" x1="0" y1="0" x2="0" y2="1"><stop offset="0" stop-color="#ffffff"/><stop offset="0.5" stop-color="#f4f4f4"/><stop offset="1" stop-color="#e4e4e4"/></linearGradient>
<linearGradient id="rgs" x1="0" y1="0" x2="0" y2="1"><stop offset="0" stop-color="#c8dcf8"/><stop offset="0.45" stop-color="#7fb0f0"/><stop offset="0.55" stop-color="#5f9cec"/><stop offset="1" stop-color="#c4e2ff"/></linearGradient>
<symbol id="book" viewBox="0 0 26 21">
<path d="M0 15l2.600-.6c3.600-.2 7.400.6 10.400 2.400 3-1.800 6.800-2.600 10.400-2.400l2.600.6v3c-5-.6-9.400.2-13 2.400-3.600-2.200-8-3-13-2.400z" fill="#e4500f"/>
<path d="M1.400 18.400c4.400-.4 8.400.4 11.600 2.200 3.200-1.800 7.200-2.600 11.600-2.200l-1.600.8c-3.800 0-7 .6-10 1.800-3-1.200-6.200-1.800-10-1.800z" fill="#f5a552"/>
<rect x="0" y="1.200" width="2.900" height="15" fill="#bf3826"/>
<rect x="23.100" y="1.200" width="2.900" height="15" fill="#cc6456"/>
<path d="M0 .4h9.500l3.500 2 3.500-2h9.500v2.200h-26z" fill="#f08c22"/>
<path d="M2.700 2.200c3.600-.8 7.500-.2 9.900 1.400v14c-2.800-1.800-6.300-2.600-9.900-2.400z" fill="url(#bkl)"/>
<path d="M23.300 2.200c-3.600-.8-7.500-.2-9.900 1.400v14c2.800-1.800 6.300-2.600 9.900-2.400z" fill="url(#bkr)"/>
<rect x="12.300" y="3.400" width="1.400" height="14.200" fill="#cdb98c"/>
<ellipse cx="13" cy="2.800" rx="2.500" ry="1.900" fill="#f08c22"/>
</symbol>
</defs></svg>
<span class="t" style="left:357.00px;top:30.00px;font-size:16.5px;color:#fff;font-weight:bold;transform:translate(0.80px,0.60px) scaleX(1.037) rotate(0.03deg);-webkit-text-stroke:0;">Rechercher un patient ...</span>
<span class="t" style="left:10.00px;top:70.00px;font-size:10.3px;color:#13175e;font-weight:bold;transform:translate(0.50px,0.00px) scaleX(1.017) rotate(0.03deg);">Motif:</span>
<span class="t" style="left:47.00px;top:70.00px;font-size:10.3px;color:#8b1a12;transform:translate(0.60px,0.50px) scaleX(1.038) rotate(0.03deg);">Maux de gorge</span>
<span class="t" style="left:340.00px;top:70.00px;font-size:10.3px;color:#13175e;font-weight:bold;transform:translate(0.00px,0.40px) scaleX(1.040) rotate(0.03deg);">Heure du Rendez–Vous :</span>
<span class="t" style="left:471.00px;top:70.00px;font-size:10.3px;color:#1a2a6a;transform:translate(0.30px,0.60px) scaleX(1.024) rotate(0.03deg);">08:45</span>
<span class="t" style="left:690.00px;top:69.00px;font-size:10.3px;color:#fbfbfb;transform:translate(0.00px,0.90px) scaleX(1.000) rotate(0.03deg);">3</span>
<span class="t" style="left:7.00px;top:92.00px;font-size:10.2px;color:#6a6a6a;transform:translate(0.80px,0.00px) scaleX(0.966) rotate(0.03deg);">Etat</span>
<span class="t" style="left:29.00px;top:92.00px;font-size:10.2px;color:#6a6a6a;transform:translate(0.50px,0.00px) scaleX(0.971) rotate(0.03deg);">Rep.</span>
<span class="t" style="left:55.00px;top:92.00px;font-size:10.2px;color:#6a6a6a;transform:translate(0.40px,0.00px) scaleX(0.985) rotate(0.03deg);">Nom</span>
<span class="t" style="left:160.00px;top:92.00px;font-size:10.2px;color:#6a6a6a;transform:translate(0.00px,0.00px) scaleX(0.998) rotate(0.03deg);">Prénom</span>
<span class="t" style="left:253.00px;top:92.00px;font-size:10.2px;color:#6a6a6a;transform:translate(0.00px,0.00px) scaleX(1.021) rotate(0.03deg);">Date de Nais.</span>
<span class="t" style="left:329.00px;top:92.00px;font-size:10.2px;color:#6a6a6a;transform:translate(0.70px,0.00px) scaleX(1.052) rotate(0.03deg);">Dernier Acte</span>
<span class="t" style="left:393.00px;top:92.00px;font-size:10.2px;color:#6a6a6a;transform:translate(0.00px,0.00px) scaleX(0.988) rotate(0.03deg);">N°Dos</span>
<span class="t" style="left:433.00px;top:92.00px;font-size:10.2px;color:#6a6a6a;transform:translate(0.20px,0.00px) scaleX(0.938) rotate(0.03deg);">MT</span>
<span class="t" style="left:462.00px;top:92.00px;font-size:10.2px;color:#6a6a6a;transform:translate(0.00px,0.00px) scaleX(0.879) rotate(0.03deg);">MED</span>
<span class="t" style="left:492.00px;top:92.00px;font-size:10.2px;color:#6a6a6a;transform:translate(0.60px,0.00px) scaleX(1.028) rotate(0.03deg);">Hon.dûs</span>
<span class="t" style="left:537.00px;top:92.00px;font-size:10.2px;color:#6a6a6a;transform:translate(0.60px,0.00px) scaleX(1.009) rotate(0.03deg);">Téléphone</span>
<span class="t" style="left:613.00px;top:92.00px;font-size:10.2px;color:#6a6a6a;transform:translate(0.50px,0.00px) scaleX(1.001) rotate(0.03deg);">Ville</span>
<span class="t" style="left:54.00px;top:105.00px;font-size:10.3px;color:#1a2fb8;transform:translate(0.70px,0.40px) scaleX(0.896) rotate(0.03deg);">DEMO</span>
<span class="t" style="left:159.00px;top:105.00px;font-size:10.3px;color:#1a2fb8;transform:translate(0.30px,0.40px) scaleX(0.980) rotate(0.03deg);">Georges</span>
<span class="t" style="left:258.00px;top:105.00px;font-size:10.3px;color:#1a2fb8;transform:translate(0.90px,0.40px) scaleX(1.027) rotate(0.03deg);">2 AOU 1940</span>
<span class="t" style="left:468.00px;top:105.00px;font-size:10.3px;color:#1a2fb8;transform:translate(0.53px,0.40px) scaleX(1.000) rotate(0.03deg);">?</span>
<div style="left:613.00px;top:105.00px;width:74.00px;height:13.4px;overflow:hidden;z-index:5;"><span class="t" style="left:0;top:0;font-size:10.3px;color:#1a2fb8;transform:translate(0.70px,0.40px) scaleX(1.034) rotate(0.03deg);">13011 LA VALE</span></div>
<span class="t" style="left:36.00px;top:117.00px;font-size:10.3px;color:#fff;transform:translate(0.13px,0.85px) scaleX(1.000) rotate(0.03deg);">1</span>
<span class="t" style="left:54.00px;top:117.00px;font-size:10.3px;color:#fff;transform:translate(0.70px,0.85px) scaleX(0.896) rotate(0.03deg);">DEMO</span>
<span class="t" style="left:159.00px;top:117.00px;font-size:10.3px;color:#fff;transform:translate(0.30px,0.85px) scaleX(0.969) rotate(0.03deg);">Jeannine</span>
<span class="t" style="left:252.00px;top:117.00px;font-size:10.3px;color:#fff;transform:translate(0.00px,0.85px) scaleX(1.024) rotate(0.03deg);">28 MAR 1933</span>
<span class="t" style="left:332.00px;top:117.00px;font-size:10.3px;color:#fff;transform:translate(0.20px,0.85px) scaleX(0.998) rotate(0.03deg);">1 DEC 2014</span>
<span class="t" style="left:393.00px;top:117.00px;font-size:10.3px;color:#fff;transform:translate(0.10px,0.85px) scaleX(1.003) rotate(0.03deg);">1697</span>
<span class="t" style="left:432.00px;top:117.00px;font-size:10.3px;color:#fff;transform:translate(0.70px,0.85px) scaleX(0.874) rotate(0.03deg);">MT</span>
<span class="t" style="left:467.00px;top:117.00px;font-size:10.3px;color:#fff;transform:translate(0.96px,0.85px) scaleX(1.000) rotate(0.03deg);">A</span>
<span class="t" style="left:505.00px;top:117.00px;font-size:10.3px;color:#fff;transform:translate(0.50px,0.85px) scaleX(1.059) rotate(0.03deg);">23,00</span>
<span class="t" style="left:536.00px;top:117.00px;font-size:10.3px;color:#fff;transform:translate(0.70px,0.85px) scaleX(1.067) rotate(0.03deg);">0323232323</span>
<div style="left:613.00px;top:117.00px;width:74.00px;height:13.4px;overflow:hidden;z-index:5;"><span class="t" style="left:0;top:0;font-size:10.3px;color:#fff;transform:translate(0.70px,0.85px) scaleX(1.001) rotate(0.03deg);">02000 LAON</span></div>
<span class="t" style="left:54.00px;top:130.00px;font-size:10.3px;color:#1a2fb8;transform:translate(0.70px,0.30px) scaleX(0.896) rotate(0.03deg);">DEMO</span>
<span class="t" style="left:159.00px;top:130.00px;font-size:10.3px;color:#1a2fb8;transform:translate(0.30px,0.30px) scaleX(0.927) rotate(0.03deg);">Paul</span>
<span class="t" style="left:263.00px;top:130.00px;font-size:10.3px;color:#1a2fb8;transform:translate(0.10px,0.30px) scaleX(0.992) rotate(0.03deg);">1 JAN 1970</span>
<span class="t" style="left:324.00px;top:130.00px;font-size:10.3px;color:#1a2fb8;transform:translate(0.00px,0.30px) scaleX(1.029) rotate(0.03deg);">10 NOV 2014</span>
<span class="t" style="left:432.00px;top:130.00px;font-size:10.3px;color:#1a2fb8;transform:translate(0.70px,0.30px) scaleX(0.874) rotate(0.03deg);">MT</span>
<span class="t" style="left:467.00px;top:130.00px;font-size:10.3px;color:#1a2fb8;transform:translate(0.96px,0.30px) scaleX(1.000) rotate(0.03deg);">A</span>
<span class="t" style="left:9.00px;top:492.00px;font-size:10.2px;color:#6a6a6a;transform:translate(0.80px,0.00px) scaleX(0.966) rotate(0.03deg);">Etat</span>
<span class="t" style="left:31.00px;top:492.00px;font-size:10.2px;color:#6a6a6a;transform:translate(0.50px,0.00px) scaleX(0.971) rotate(0.03deg);">Rep.</span>
<span class="t" style="left:57.00px;top:492.00px;font-size:10.2px;color:#6a6a6a;transform:translate(0.40px,0.00px) scaleX(0.985) rotate(0.03deg);">Nom</span>
<span class="t" style="left:162.00px;top:492.00px;font-size:10.2px;color:#6a6a6a;transform:translate(0.00px,0.00px) scaleX(0.998) rotate(0.03deg);">Prénom</span>
<span class="t" style="left:255.00px;top:492.00px;font-size:10.2px;color:#6a6a6a;transform:translate(0.00px,0.00px) scaleX(1.021) rotate(0.03deg);">Date de Nais.</span>
<span class="t" style="left:331.00px;top:492.00px;font-size:10.2px;color:#6a6a6a;transform:translate(0.70px,0.00px) scaleX(1.052) rotate(0.03deg);">Dernier Acte</span>
<span class="t" style="left:395.00px;top:492.00px;font-size:10.2px;color:#6a6a6a;transform:translate(0.00px,0.00px) scaleX(0.988) rotate(0.03deg);">N°Dos</span>
<span class="t" style="left:435.00px;top:492.00px;font-size:10.2px;color:#6a6a6a;transform:translate(0.20px,0.00px) scaleX(0.938) rotate(0.03deg);">MT</span>
<span class="t" style="left:464.00px;top:492.00px;font-size:10.2px;color:#6a6a6a;transform:translate(0.00px,0.00px) scaleX(0.879) rotate(0.03deg);">MED</span>
<span class="t" style="left:494.00px;top:492.00px;font-size:10.2px;color:#6a6a6a;transform:translate(0.60px,0.00px) scaleX(1.028) rotate(0.03deg);">Hon.dûs</span>
<span class="t" style="left:539.00px;top:492.00px;font-size:10.2px;color:#6a6a6a;transform:translate(0.60px,0.00px) scaleX(1.009) rotate(0.03deg);">Téléphone</span>
<span class="t" style="left:615.00px;top:492.00px;font-size:10.2px;color:#6a6a6a;transform:translate(0.50px,0.00px) scaleX(1.001) rotate(0.03deg);">Ville</span>
<span class="t" style="left:56.00px;top:506.00px;font-size:10.3px;color:#1a2fb8;transform:translate(0.70px,0.00px) scaleX(0.919) rotate(0.03deg);">DEMAUX</span>
<span class="t" style="left:161.00px;top:506.00px;font-size:10.3px;color:#1a2fb8;transform:translate(0.30px,0.00px) scaleX(1.008) rotate(0.03deg);">Nathie</span>
<span class="t" style="left:264.00px;top:506.00px;font-size:10.3px;color:#1a2fb8;transform:translate(0.70px,0.00px) scaleX(0.989) rotate(0.03deg);">6 FEV 1984</span>
<span class="t" style="left:395.00px;top:506.00px;font-size:10.3px;color:#1a2fb8;transform:translate(0.10px,0.00px) scaleX(1.003) rotate(0.03deg);">7857</span>
<span class="t" style="left:470.00px;top:506.00px;font-size:10.3px;color:#1a2fb8;transform:translate(0.53px,0.00px) scaleX(1.000) rotate(0.03deg);">?</span>
<span class="t" style="left:56.00px;top:518.00px;font-size:10.3px;color:#1a2fb8;transform:translate(0.70px,0.45px) scaleX(0.896) rotate(0.03deg);">DEMO</span>
<span class="t" style="left:161.00px;top:518.00px;font-size:10.3px;color:#1a2fb8;transform:translate(0.30px,0.45px) scaleX(0.980) rotate(0.03deg);">Georges</span>
<span class="t" style="left:260.00px;top:518.00px;font-size:10.3px;color:#1a2fb8;transform:translate(0.90px,0.45px) scaleX(1.027) rotate(0.03deg);">2 AOU 1940</span>
<span class="t" style="left:470.00px;top:518.00px;font-size:10.3px;color:#1a2fb8;transform:translate(0.53px,0.45px) scaleX(1.000) rotate(0.03deg);">?</span>
<div style="left:615.00px;top:518.00px;width:72.00px;height:13.4px;overflow:hidden;z-index:5;"><span class="t" style="left:0;top:0;font-size:10.3px;color:#1a2fb8;transform:translate(0.70px,0.45px) scaleX(1.034) rotate(0.03deg);">13011 LA VALE</span></div>
<span class="t" style="left:38.00px;top:530.00px;font-size:10.3px;color:#1a2fb8;transform:translate(0.13px,0.90px) scaleX(1.000) rotate(0.03deg);">1</span>
<span class="t" style="left:56.00px;top:530.00px;font-size:10.3px;color:#1a2fb8;transform:translate(0.70px,0.90px) scaleX(0.896) rotate(0.03deg);">DEMO</span>
<span class="t" style="left:161.00px;top:530.00px;font-size:10.3px;color:#1a2fb8;transform:translate(0.30px,0.90px) scaleX(0.969) rotate(0.03deg);">Jeannine</span>
<span class="t" style="left:254.00px;top:530.00px;font-size:10.3px;color:#1a2fb8;transform:translate(0.00px,0.90px) scaleX(1.024) rotate(0.03deg);">28 MAR 1933</span>
<span class="t" style="left:334.00px;top:530.00px;font-size:10.3px;color:#1a2fb8;transform:translate(0.20px,0.90px) scaleX(0.998) rotate(0.03deg);">1 DEC 2014</span>
<span class="t" style="left:395.00px;top:530.00px;font-size:10.3px;color:#1a2fb8;transform:translate(0.10px,0.90px) scaleX(1.003) rotate(0.03deg);">1697</span>
<span class="t" style="left:434.00px;top:530.00px;font-size:10.3px;color:#1a2fb8;transform:translate(0.70px,0.90px) scaleX(0.874) rotate(0.03deg);">MT</span>
<span class="t" style="left:469.00px;top:530.00px;font-size:10.3px;color:#1a2fb8;transform:translate(0.96px,0.90px) scaleX(1.000) rotate(0.03deg);">A</span>
<span class="t" style="left:507.00px;top:530.00px;font-size:10.3px;color:#e8291c;transform:translate(0.50px,0.90px) scaleX(1.059) rotate(0.03deg);">23,00</span>
<span class="t" style="left:538.00px;top:530.00px;font-size:10.3px;color:#1a2fb8;transform:translate(0.70px,0.90px) scaleX(1.067) rotate(0.03deg);">0323232323</span>
<div style="left:615.00px;top:530.00px;width:72.00px;height:13.4px;overflow:hidden;z-index:5;"><span class="t" style="left:0;top:0;font-size:10.3px;color:#1a2fb8;transform:translate(0.70px,0.90px) scaleX(1.001) rotate(0.03deg);">02000 LAON</span></div>
<span class="t" style="left:56.00px;top:543.00px;font-size:10.3px;color:#1a2fb8;transform:translate(0.70px,0.35px) scaleX(0.896) rotate(0.03deg);">DEMO</span>
<span class="t" style="left:161.00px;top:543.00px;font-size:10.3px;color:#1a2fb8;transform:translate(0.30px,0.35px) scaleX(0.927) rotate(0.03deg);">Paul</span>
<span class="t" style="left:265.00px;top:543.00px;font-size:10.3px;color:#1a2fb8;transform:translate(0.10px,0.35px) scaleX(0.992) rotate(0.03deg);">1 JAN 1970</span>
<span class="t" style="left:326.00px;top:543.00px;font-size:10.3px;color:#1a2fb8;transform:translate(0.00px,0.35px) scaleX(1.029) rotate(0.03deg);">10 NOV 2014</span>
<span class="t" style="left:434.00px;top:543.00px;font-size:10.3px;color:#1a2fb8;transform:translate(0.70px,0.35px) scaleX(0.874) rotate(0.03deg);">MT</span>
<span class="t" style="left:469.00px;top:543.00px;font-size:10.3px;color:#1a2fb8;transform:translate(0.96px,0.35px) scaleX(1.000) rotate(0.03deg);">A</span>
<span class="t" style="left:58.00px;top:450.00px;font-size:11.6px;color:#fff;transform:translate(0.60px,0.10px) scaleX(1.012) rotate(0.03deg);-webkit-text-stroke:0.45px #fff;">Membres de la famille...</span>
<span class="t" style="left:291.00px;top:470.00px;font-size:10.8px;color:#fff;transform:translate(0.20px,0.80px) scaleX(1.030) rotate(0.03deg);-webkit-text-stroke:0.3px #fff;">Famille de Jeannine DEMO</span>
<span class="t" style="left:714.00px;top:64.00px;font-size:10.3px;color:#1a38b4;font-weight:bold;font-style:italic;transform:translate(0.60px,0.50px) scaleX(0.976) rotate(0.03deg);">Champs de Recherche…</span>
<span class="t" style="left:714.00px;top:176.00px;font-size:10.3px;color:#16806e;font-weight:bold;font-style:italic;transform:translate(0.60px,0.00px) scaleX(0.963) rotate(0.03deg);">Filtrer sur…</span>
<span class="t" style="left:714.00px;top:259.00px;font-size:10.3px;color:#b5380f;font-weight:bold;font-style:italic;transform:translate(0.60px,0.50px) scaleX(0.970) rotate(0.03deg);">Autres Recherches…</span>
<span class="t" style="left:728.00px;top:78.00px;font-size:10.3px;color:#3b3b3b;font-style:italic;transform:translate(0.30px,0.40px) scaleX(1.002) rotate(0.03deg);">Recherche continue…</span>
<span class="t" style="left:751.00px;top:100.00px;font-size:10.3px;color:#1a38b4;font-style:italic;transform:translate(0.00px,0.10px) scaleX(1.073) rotate(0.03deg);">Nom:</span>
<span class="t" style="left:801.00px;top:100.00px;font-size:10.3px;color:#1a2fb8;transform:translate(0.00px,0.70px) scaleX(0.906) rotate(0.03deg);">DEMO</span>
<span class="t" style="left:737.00px;top:121.00px;font-size:10.3px;color:#1a38b4;font-style:italic;transform:translate(0.60px,0.70px) scaleX(1.023) rotate(0.03deg);">Prénom:</span>
<span class="t" style="left:723.00px;top:143.00px;font-size:10.3px;color:#3b3b3b;font-style:italic;transform:translate(0.20px,0.40px) scaleX(1.039) rotate(0.03deg);">N° Dossier:</span>
<span class="t" style="left:727.00px;top:160.00px;font-size:10.3px;color:#3b3b3b;font-style:italic;transform:translate(0.00px,0.60px) scaleX(1.009) rotate(0.03deg);">Autres Champs…</span>
<span class="t" style="left:732.00px;top:190.00px;font-size:9.9px;color:#14786a;transform:translate(0.50px,0.50px) scaleX(1.079) rotate(0.03deg);">Tous les Dossiers</span>
<span class="t" style="left:732.00px;top:207.00px;font-size:9.9px;color:#14786a;transform:translate(0.50px,0.70px) scaleX(1.069) rotate(0.03deg);">Dossiers Non Archivés</span>
<span class="t" style="left:732.00px;top:224.00px;font-size:9.9px;color:#14786a;transform:translate(0.50px,0.70px) scaleX(1.064) rotate(0.03deg);">Dossiers Archivés</span>
<span class="t" style="left:732.00px;top:241.00px;font-size:9.9px;color:#14786a;transform:translate(0.50px,0.50px) scaleX(1.036) rotate(0.03deg);">Patients Décédés</span>
<span class="t" style="left:852.00px;top:241.00px;font-size:12.5px;color:#5a5a5a;transform:translate(0.20px,0.20px) scaleX(1.000) rotate(0.03deg);-webkit-text-stroke:0;">†</span>
<span class="t" style="left:733.00px;top:277.00px;font-size:10.3px;color:#3b3b3b;font-style:italic;transform:translate(0.70px,0.80px) scaleX(1.019) rotate(0.03deg);">Par Date d&#x27;Acte :</span>
<span class="t" style="left:731.00px;top:297.00px;font-size:9.9px;color:#b5380f;transform:translate(0.40px,0.00px) scaleX(1.078) rotate(0.03deg);">Patients vus ce jour</span>
<span class="t" style="left:731.00px;top:318.00px;font-size:9.9px;color:#b5380f;transform:translate(0.40px,0.40px) scaleX(1.114) rotate(0.03deg);">du:</span>
<span class="t" style="left:753.00px;top:318.00px;font-size:9.9px;color:#2a2a33;transform:translate(0.00px,0.50px) scaleX(1.068) rotate(0.03deg);">31 MAR 2015</span>
<span class="t" style="left:822.00px;top:318.00px;font-size:9.9px;color:#b5380f;transform:translate(0.60px,0.50px) scaleX(0.997) rotate(0.03deg);">au:</span>
<span class="t" style="left:841.00px;top:318.00px;font-size:9.9px;color:#2a2a33;transform:translate(0.00px,0.50px) scaleX(1.068) rotate(0.03deg);">31 MAR 2015</span>
<span class="t" style="left:731.00px;top:336.00px;font-size:9.9px;color:#b5380f;transform:translate(0.40px,0.50px) scaleX(1.085) rotate(0.03deg);">Rendez–Vous restants du jour</span>
<span class="t" style="left:731.00px;top:356.00px;font-size:9.9px;color:#b5380f;transform:translate(0.40px,0.90px) scaleX(1.073) rotate(0.03deg);">Tous les Médecins</span>
<span class="t" style="left:733.00px;top:396.00px;font-size:10.3px;color:#3b3b3b;font-style:italic;transform:translate(0.70px,0.80px) scaleX(1.014) rotate(0.03deg);">Par Groupe de Patient :</span>
<span class="t" style="left:174.00px;top:68.00px;font-size:20.5px;color:#fff;font-weight:bold;transform:translate(0.80px,0.20px) scaleX(1.000) rotate(0.03deg);z-index:11;-webkit-text-stroke:0;">5</span>
<span class="t" style="left:530.00px;top:68.00px;font-size:20.5px;color:#fff;font-weight:bold;transform:translate(0.90px,0.30px) scaleX(1.000) rotate(0.03deg);z-index:11;-webkit-text-stroke:0;">6</span>
<span class="t" style="left:843.00px;top:115.00px;font-size:20.5px;color:#fff;font-weight:bold;transform:translate(0.90px,0.90px) scaleX(1.000) rotate(0.03deg);z-index:11;-webkit-text-stroke:0;">4</span>
<span class="t" style="left:79.00px;top:139.00px;font-size:20.5px;color:#fff;font-weight:bold;transform:translate(0.80px,0.40px) scaleX(1.000) rotate(0.03deg);z-index:11;-webkit-text-stroke:0;">7</span>
</div>
</body>
</html>
